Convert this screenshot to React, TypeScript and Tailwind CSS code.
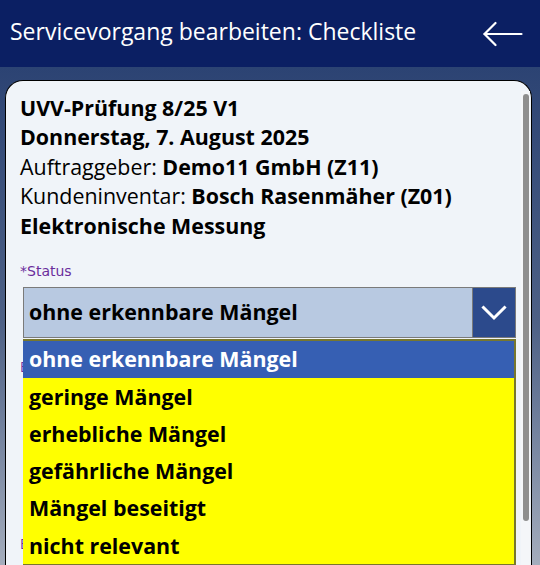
import React from "react";

const items = [
  "geringe Mängel",
  "erhebliche Mängel",
  "gefährliche Mängel",
  "Mängel beseitigt",
  "nicht relevant",
];

export default function App() {
  return (
    <div className="w-[540px] h-[565px] overflow-hidden flex flex-col" style={{ fontFamily: "'Open Sans', sans-serif" }}>
      <div className="h-[67px] shrink-0 bg-[#0b1f63] flex items-center justify-between pl-[10px] pr-[17px]">
        <span className="text-white text-[23px] leading-none pb-[4px]">Servicevorgang bearbeiten: Checkliste</span>
        <svg width="40" height="26" viewBox="0 0 40 26" fill="none" stroke="white" strokeWidth="2.2" strokeLinecap="round" strokeLinejoin="round">
          <path d="M1.5 13 H38.5" />
          <path d="M12.5 2 L1.5 13 L12.5 24" />
        </svg>
      </div>
      <div className="flex-1 bg-gradient-to-b from-[#2c4373] via-[#4e6186] to-[#aab2c0] pt-[13px] pl-[5px]">
        <div className="relative w-[527px] h-[500px] rounded-t-[18px] border border-black border-b-0 bg-[#f0f4f9] pl-[14px] pt-[12px]">
          <div className="text-[21.4px] leading-[29.4px] text-black">
            <div className="font-bold">UVV-Prüfung 8/25 V1</div>
            <div className="font-bold">Donnerstag, 7. August 2025</div>
            <div>Auftraggeber: <span className="font-bold">Demo11 GmbH (Z11)</span></div>
            <div>Kundeninventar: <span className="font-bold">Bosch Rasenmäher (Z01)</span></div>
            <div className="font-bold">Elektronische Messung</div>
          </div>
          <div className="mt-[22px] leading-[18px] text-[#6a2c9c]" style={{ fontFamily: "'DejaVu Sans', sans-serif", fontSize: 14 }}>*Status</div>
          <div className="mt-[7px] ml-[3px] w-[493px] h-[51px] flex border border-[#7a7a7a] bg-[#b8c9e1]">
            <div className="flex-1 flex items-center pl-[5px] text-[21.4px] font-bold text-black">ohne erkennbare Mängel</div>
            <div className="w-[43px] bg-[#2c4a8c] flex items-center justify-center border-l border-[#7a7a7a]">
              <svg width="26" height="16" viewBox="0 0 26 16" fill="none" stroke="white" strokeWidth="3" strokeLinecap="square">
                <path d="M2.5 2.5 L13 13 L23.5 2.5" />
              </svg>
            </div>
          </div>
          <div className="mt-[18px] text-[14px] text-[#6a2c9c]">Bemerkung</div>
          <div className="mt-[156px] text-[14px] text-[#6a2c9c]">Bild</div>

          <div className="absolute left-[17px] top-[258px] w-[493px] border-t-2 border-r-2 border-b-2 border-[#77772e] bg-[#ffff00]">
            <div className="h-[37px] bg-[#365fb3] flex items-center pl-[6px] text-[21.4px] font-bold text-white">ohne erkennbare Mängel</div>
            {items.map((t) => (
              <div key={t} className="h-[37.3px] flex items-center pl-[6px] text-[21.4px] font-bold text-black">{t}</div>
            ))}
          </div>

          <div className="absolute right-[1px] top-[10px] w-[9px] h-[480px] bg-[#f4f6f9]">
            <div className="mx-auto mt-[3px] w-[6px] h-[427px] rounded-full bg-[#8e8e8e]" />
          </div>
        </div>
      </div>
    </div>
  );
}
